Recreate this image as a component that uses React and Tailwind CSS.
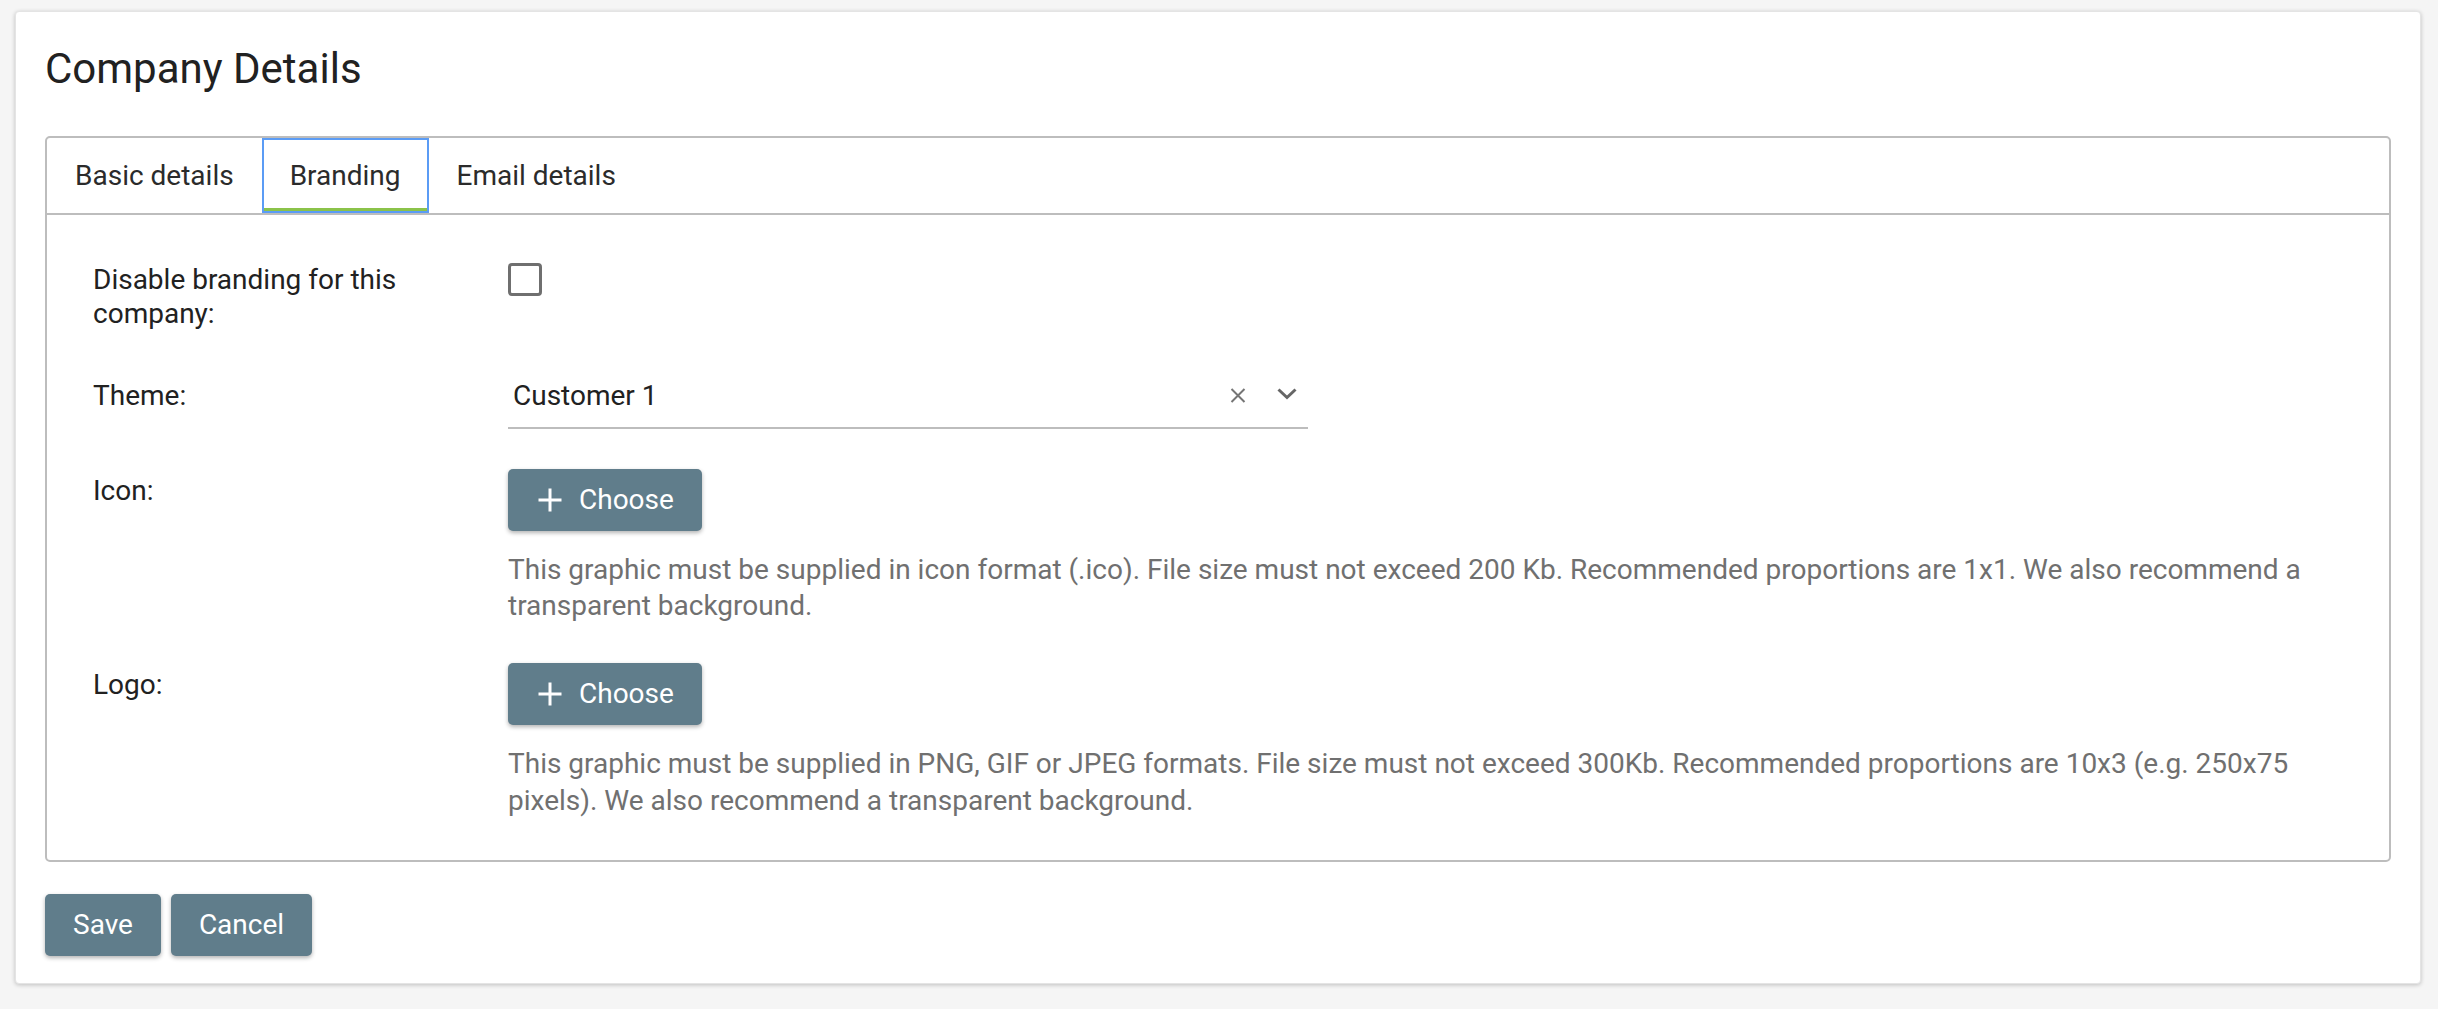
import React from "react";

const font = { fontFamily: "Roboto, 'Liberation Sans', sans-serif" };

function PlusIcon() {
  return (
    <svg width="26" height="26" viewBox="0 0 26 26" className="shrink-0">
      <path d="M13 1.5V24.5M1.5 13H24.5" stroke="#ffffff" strokeWidth="3" fill="none" />
    </svg>
  );
}

function ChooseButton() {
  return (
    <button className="flex h-[62px] items-center gap-[16px] rounded-[5px] bg-[#607d8b] pl-[29px] pr-[28px] text-[28px] leading-[33.6px] text-white shadow-[0_2px_4px_rgba(0,0,0,0.3)]">
      <PlusIcon />
      <span>Choose</span>
    </button>
  );
}

function Description({ children }) {
  return <p className="mt-[21px] text-[28px] leading-[36.75px] text-[#707070]">{children}</p>;
}

function Label({ children, className = "" }) {
  return (
    <div className={`w-[415px] shrink-0 pr-[55px] text-[28px] leading-[33.6px] text-[#212121] ${className}`}>
      {children}
    </div>
  );
}

export default function App() {
  return (
    <div className="min-h-screen bg-[#f5f5f5] pl-[15px] pr-[17px] pt-[11px] pb-[24px]" style={font}>
      <div className="rounded-[4px] border border-[#e4e4e4] bg-white px-[29px] pt-[31.5px] pb-[27px] shadow-[0_1px_4px_rgba(0,0,0,0.22)]">
        <h1 className="text-[42px] leading-[50.4px] font-normal text-[#212121]">Company Details</h1>

        <div className="mt-[42px] rounded-[5px] border-2 border-[#bdbdbd]">
          <div className="flex border-b-2 border-[#bdbdbd]">
            <div className="flex h-[75px] items-center px-[28px] text-[28px] leading-[33.6px] text-[#2b2b2b]">
              Basic details
            </div>
            <div className="relative flex h-[75px] items-center border-b-[5px] border-[#8bc34a] px-[28px] pt-[5px] text-[28px] leading-[33.6px] text-[#2b2b2b] outline-2 -outline-offset-2 outline-[#5b9cf5]">
              Branding
            </div>
            <div className="flex h-[75px] items-center px-[28px] text-[28px] leading-[33.6px] text-[#2b2b2b]">
              Email details
            </div>
          </div>

          <div className="pl-[46px] pr-[46px] pt-[48px] pb-[40px]">
            <div className="flex">
              <Label>Disable branding for this company:</Label>
              <div className="h-[33px] w-[34px] rounded-[4px] border-[3px] border-[#6f6f6f] bg-white" />
            </div>

            <div className="mt-[49px] flex">
              <Label>Theme:</Label>
              <div className="flex w-[800px] items-center border-b-2 border-[#bdbdbd] pb-[14px] pl-[5px] pr-[11px]">
                <span className="flex-1 text-[28px] leading-[33.6px] text-[#212121]">Customer 1</span>
                <svg width="16" height="15" viewBox="0 0 16 15" className="mr-[31px]">
                  <path d="M1.5 1L14.5 14M14.5 1L1.5 14" stroke="#757575" strokeWidth="2" fill="none" />
                </svg>
                <svg width="20" height="12" viewBox="0 0 20 12" className="mb-[4px]">
                  <path d="M1.5 1.5L10 9.5L18.5 1.5" stroke="#666666" strokeWidth="3" fill="none" />
                </svg>
              </div>
            </div>

            <div className="mt-[40px] flex">
              <Label className="pt-[5px]">Icon:</Label>
              <div className="flex-1">
                <ChooseButton />
                <Description>
                  This graphic must be supplied in icon format (.ico). File size must not exceed 200 Kb. Recommended proportions are 1x1. We also recommend a transparent background.
                </Description>
              </div>
            </div>

            <div className="mt-[38px] flex">
              <Label className="pt-[5px]">Logo:</Label>
              <div className="flex-1">
                <ChooseButton />
                <Description>
                  This graphic must be supplied in PNG, GIF or JPEG formats. File size must not exceed 300Kb. Recommended proportions are 10x3 (e.g. 250x75 pixels). We also recommend a transparent background.
                </Description>
              </div>
            </div>
          </div>
        </div>

        <div className="mt-[32px] flex gap-[10px]">
          <button className="h-[62px] rounded-[5px] bg-[#607d8b] px-[28px] text-[28px] leading-[33.6px] text-white shadow-[0_2px_4px_rgba(0,0,0,0.3)]">
            Save
          </button>
          <button className="h-[62px] rounded-[5px] bg-[#607d8b] px-[28px] text-[28px] leading-[33.6px] text-white shadow-[0_2px_4px_rgba(0,0,0,0.3)]">
            Cancel
          </button>
        </div>
      </div>
    </div>
  );
}
